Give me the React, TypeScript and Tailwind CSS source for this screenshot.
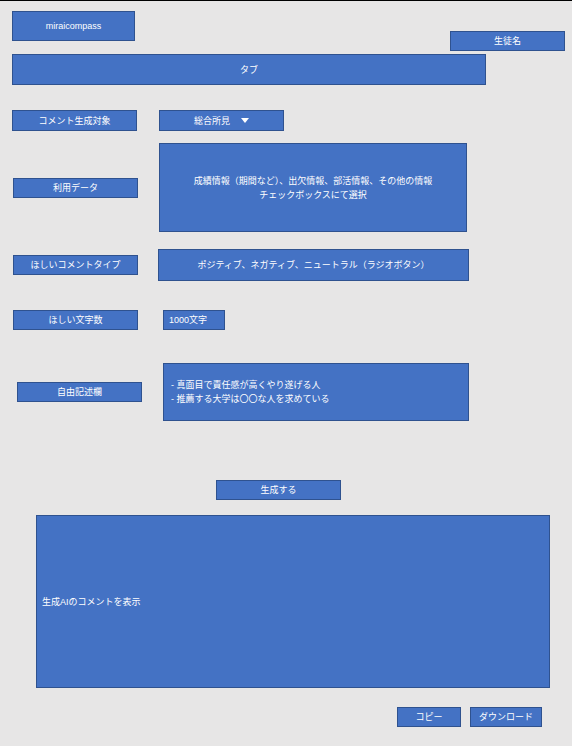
const box = "flex items-center justify-center border border-[#2F528F] bg-[#4472C4] text-[9px] leading-[14px] text-white";

function FieldRow({ label, labelClass, children, className }: { label: string; labelClass: string; children: React.ReactNode; className: string }) {
  return (
    <div className={`flex items-center ${className}`}>
      <div className={`${box} h-[20px] w-[125px] shrink-0 ${labelClass}`}>{label}</div>
      {children}
    </div>
  );
}

export default function App() {
  return (
    <div
      className="flex h-[746px] w-[572px] flex-col overflow-hidden border-t border-black bg-[#E7E6E6] pt-[10px]"
      style={{ fontFamily: '"Liberation Sans", "Noto Sans CJK JP", sans-serif' }}
    >
      {/* Header */}
      <div className="flex items-start justify-between pl-[12px] pr-[7px]">
        <div className={`${box} h-[30px] w-[123px]`}>miraicompass</div>
        <div className={`${box} mt-[20px] h-[20px] w-[115px]`}>生徒名</div>
      </div>

      {/* Tab bar */}
      <div className={`${box} mt-[3px] ml-[12px] h-[31px] w-[474px]`}>タブ</div>

      {/* Target */}
      <div className="mt-[25px] flex items-center">
        <div className={`${box} ml-[12px] h-[21px] w-[125px]`}>コメント生成対象</div>
        <div className={`${box} ml-[22px] h-[21px] w-[125px] gap-[11px]`}>
          <span>総合所見</span>
          <svg width="8" height="5" viewBox="0 0 8 5">
            <polygon points="0,0 8,0 4,5" fill="#fff" />
          </svg>
        </div>
      </div>

      <FieldRow label="利用データ" labelClass="ml-[13px]" className="mt-[12px]">
        <div className={`${box} ml-[21px] h-[89px] w-[308px] flex-col`}>
          <span>成績情報（期間など）、出欠情報、部活情報、その他の情報</span>
          <span>チェックボックスにて選択</span>
        </div>
      </FieldRow>

      <FieldRow label="ほしいコメントタイプ" labelClass="ml-[13px]" className="mt-[17px]">
        <div className={`${box} ml-[20px] h-[32px] w-[311px]`}>
          ポジティブ、ネガティブ、ニュートラル（ラジオボタン）
        </div>
      </FieldRow>

      <FieldRow label="ほしい文字数" labelClass="ml-[13px]" className="mt-[29px]">
        <div className={`${box} ml-[25px] h-[20px] w-[62px] !justify-start pl-[5px]`}>1000文字</div>
      </FieldRow>

      <FieldRow label="自由記述欄" labelClass="ml-[17px]" className="mt-[33px]">
        <div className={`${box} ml-[21px] h-[58px] w-[306px] flex-col !items-start pl-[7px]`}>
          <span>- 真面目で責任感が高くやり遂げる人</span>
          <span>- 推薦する大学は〇〇な人を求めている</span>
        </div>
      </FieldRow>

      {/* Generate */}
      <div className={`${box} mt-[59px] ml-[216px] h-[20px] w-[125px]`}>生成する</div>

      {/* Result */}
      <div className={`${box} mt-[15px] ml-[36px] h-[173px] w-[514px] !justify-start pl-[5px]`}>
        生成AIのコメントを表示
      </div>

      {/* Actions */}
      <div className="mt-[19px] flex gap-[9px] pl-[397px]">
        <div className={`${box} h-[20px] w-[64px]`}>コピー</div>
        <div className={`${box} h-[20px] w-[72px]`}>ダウンロード</div>
      </div>
    </div>
  );
}
